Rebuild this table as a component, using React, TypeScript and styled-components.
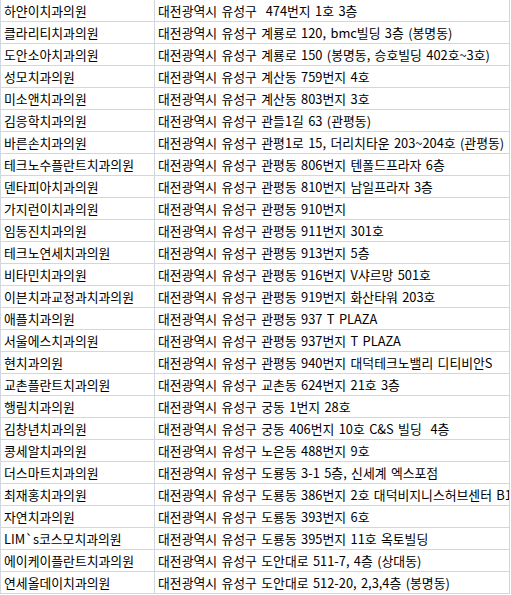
import React from "react";
import styled, { createGlobalStyle } from "styled-components";

const GlobalStyle = createGlobalStyle`
	html, body {
		margin: 0;
		padding: 0;
		background: #ffffff;
	}
	body {
		font-family: "Noto Sans CJK KR", "Noto Sans", sans-serif;
		color: #000000;
	}
`;

const Sheet = styled.div`
	width: 511px;
	height: 595px;
	overflow: hidden;
`;

const Grid = styled.table`
	border-collapse: collapse;
	table-layout: fixed;
	width: 510px;
	margin-top: -1px;
	font-size: 12.85px;
	word-spacing: 1.5px;
`;

const Cell = styled.td<{ $w: number }>`
	width: ${p => p.$w}px;
	height: 21px;
	padding: 0 0 0 3px;
	border: 1px solid #d2d6de;
	white-space: pre;
	overflow: hidden;
	line-height: 21px;
	vertical-align: middle;
`;

const ROWS: [string, string][] = [
	["하얀이치과의원", "대전광역시 유성구  474번지 1호 3층"],
	["클라리티치과의원", "대전광역시 유성구 계룡로 120, bmc빌딩 3층 (봉명동)"],
	["도안소아치과의원", "대전광역시 유성구 계룡로 150 (봉명동, 승호빌딩 402호~3호)"],
	["성모치과의원", "대전광역시 유성구 계산동 759번지 4호"],
	["미소앤치과의원", "대전광역시 유성구 계산동 803번지 3호"],
	["김응학치과의원", "대전광역시 유성구 관들1길 63 (관평동)"],
	["바른손치과의원", "대전광역시 유성구 관평1로 15, 더리치타운 203~204호 (관평동)"],
	["테크노수플란트치과의원", "대전광역시 유성구 관평동 806번지 텐폴드프라자 6층"],
	["덴타피아치과의원", "대전광역시 유성구 관평동 810번지 남일프라자 3층"],
	["가지런이치과의원", "대전광역시 유성구 관평동 910번지"],
	["임동진치과의원", "대전광역시 유성구 관평동 911번지 301호"],
	["테크노연세치과의원", "대전광역시 유성구 관평동 913번지 5층"],
	["비타민치과의원", "대전광역시 유성구 관평동 916번지 V샤르망 501호"],
	["이븐치과교정과치과의원", "대전광역시 유성구 관평동 919번지 화산타워 203호"],
	["애플치과의원", "대전광역시 유성구 관평동 937 T PLAZA"],
	["서울에스치과의원", "대전광역시 유성구 관평동 937번지 T PLAZA"],
	["현치과의원", "대전광역시 유성구 관평동 940번지 대덕테크노밸리 디티비안S"],
	["교촌플란트치과의원", "대전광역시 유성구 교촌동 624번지 21호 3층"],
	["행림치과의원", "대전광역시 유성구 궁동 1번지 28호"],
	["김창년치과의원", "대전광역시 유성구 궁동 406번지 10호 C&S 빌딩  4층"],
	["콩세알치과의원", "대전광역시 유성구 노은동 488번지 9호"],
	["더스마트치과의원", "대전광역시 유성구 도룡동 3-1 5층, 신세계 엑스포점"],
	["최재홍치과의원", "대전광역시 유성구 도룡동 386번지 2호 대덕비지니스허브센터 B1"],
	["자연치과의원", "대전광역시 유성구 도룡동 393번지 6호"],
	["LIM`s코스모치과의원", "대전광역시 유성구 도룡동 395번지 11호 옥토빌딩"],
	["에이케이플란트치과의원", "대전광역시 유성구 도안대로 511-7, 4층 (상대동)"],
	["연세올데이치과의원", "대전광역시 유성구 도안대로 512-20, 2,3,4층 (봉명동)"],
];

export default function App() {
	return (
		<Sheet>
			<GlobalStyle />
			<Grid>
				<tbody>
					{ROWS.map(([name, addr]) => (
						<tr key={name}>
							<Cell $w={150}>{name}</Cell>
							<Cell $w={351}>{addr}</Cell>
						</tr>
					))}
				</tbody>
			</Grid>
		</Sheet>
	);
}
